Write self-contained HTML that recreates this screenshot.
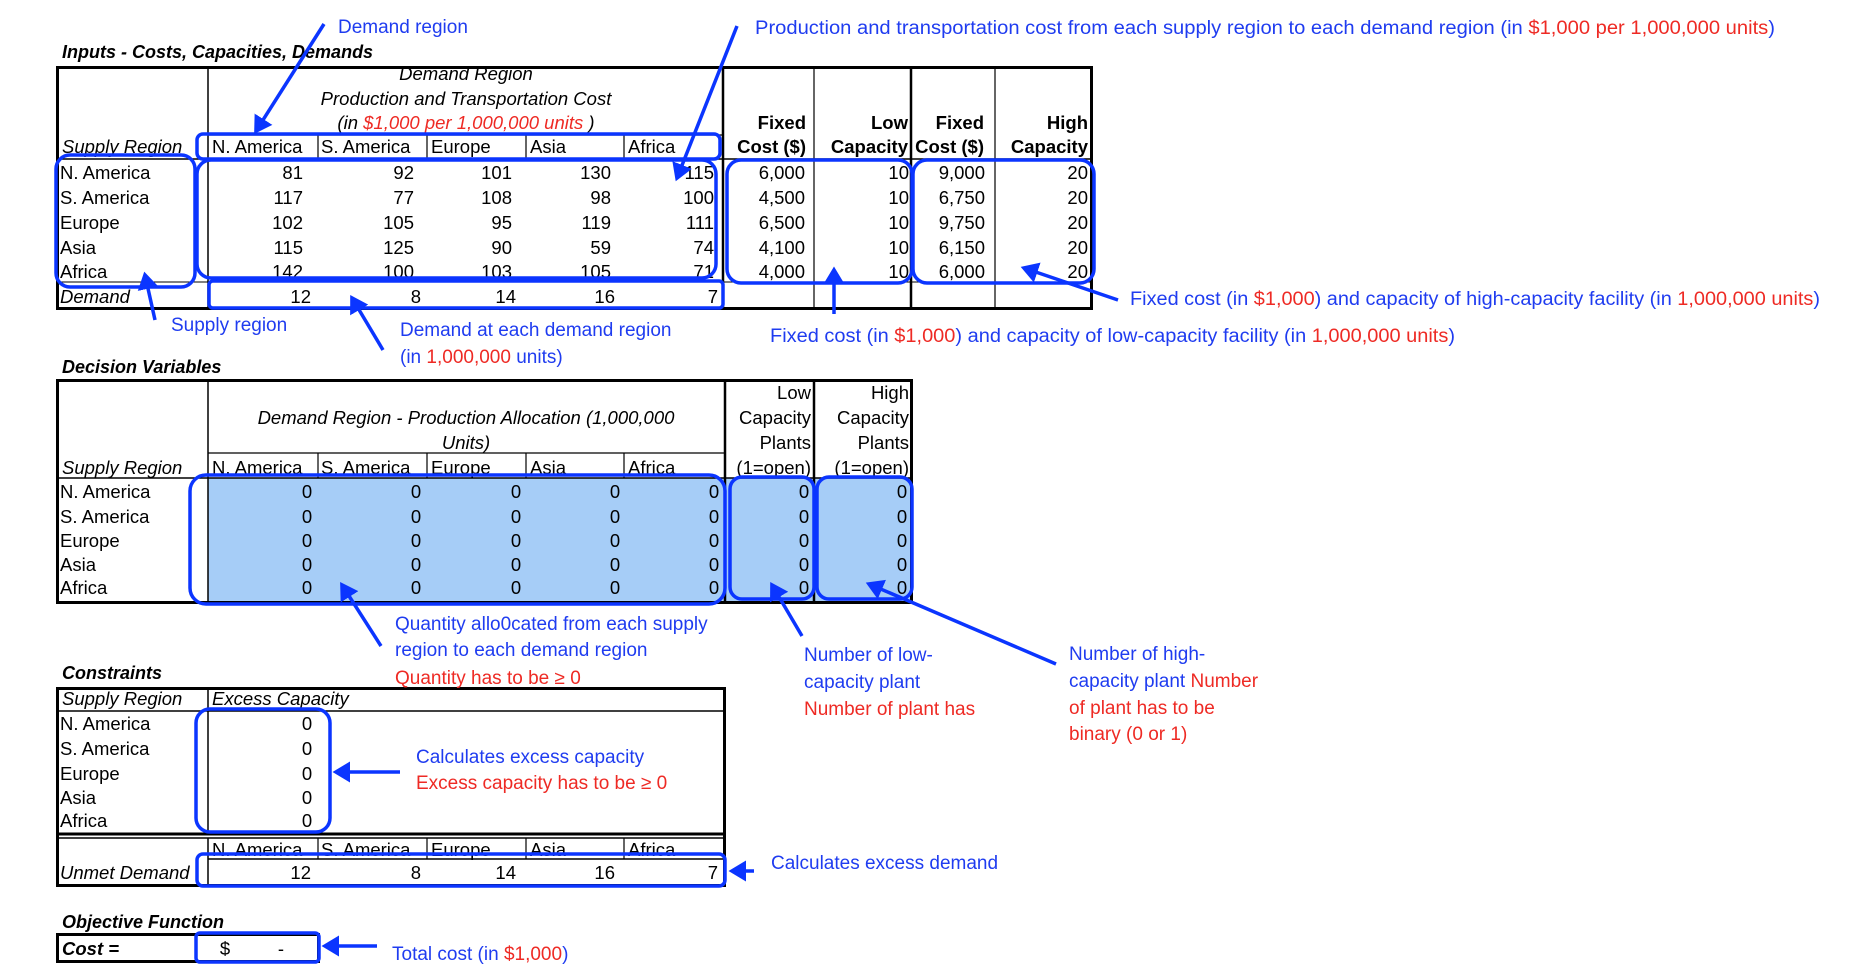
<!DOCTYPE html>
<html><head><meta charset="utf-8"><style>
html,body{margin:0;padding:0;background:#fff;}
svg{display:block;}
text{font-family:"Liberation Sans",Arial,sans-serif;}
.t{font-size:18.5px;fill:#000;}
.i{font-style:italic;}
.b{font-weight:bold;}
.a{font-size:19px;fill:#1f3cf0;}
.r{fill:#ee2a24;}
.bl{fill:none;stroke:#0b35ff;stroke-width:3.5;}
.al{stroke:#0b35ff;stroke-width:3.5;fill:none;}
</style></head><body>
<svg width="1866" height="980" viewBox="0 0 1866 980" xmlns="http://www.w3.org/2000/svg">
<defs><marker id="ah" markerWidth="6" markerHeight="6" refX="4" refY="3" orient="auto" markerUnits="strokeWidth"><path d="M0,0 L5,3 L0,6 Z" fill="#0b35ff"/></marker></defs>

<!-- ===== TABLE 1 ===== -->
<text x="62" y="58" class="t b i" style="font-size:18px">Inputs - Costs, Capacities, Demands</text>
<g stroke="#000" fill="none">
<rect x="57.5" y="67.5" width="1034" height="241" stroke-width="3"/>
<line x1="208" y1="67" x2="208" y2="309" stroke-width="1.5"/>
<line x1="723" y1="67" x2="723" y2="309" stroke-width="2.5"/>
<line x1="814" y1="67" x2="814" y2="309" stroke-width="1.2"/>
<line x1="911" y1="67" x2="911" y2="309" stroke-width="2.5"/>
<line x1="995" y1="67" x2="995" y2="309" stroke-width="1.2"/>
<line x1="208" y1="135" x2="723" y2="135" stroke-width="1.2"/>
<line x1="57" y1="159" x2="1091" y2="159" stroke-width="1.5"/>
<line x1="57" y1="282" x2="1091" y2="282" stroke-width="1"/>
<g stroke-width="1.2"><line x1="318" y1="135" x2="318" y2="159"/><line x1="427" y1="135" x2="427" y2="159"/><line x1="526" y1="135" x2="526" y2="159"/><line x1="624" y1="135" x2="624" y2="159"/></g>
</g>
<g class="t i" text-anchor="middle">
<text x="466" y="80">Demand Region</text>
<text x="466" y="105">Production and Transportation Cost</text>
<text x="466" y="129">(in <tspan class="r">$1,000 per 1,000,000 units</tspan> )</text>
</g>
<g class="t b" text-anchor="end">
<text x="806" y="129">Fixed</text><text x="806" y="153">Cost ($)</text>
<text x="908" y="129">Low</text><text x="908" y="153">Capacity</text>
<text x="984" y="129">Fixed</text><text x="984" y="153">Cost ($)</text>
<text x="1088" y="129">High</text><text x="1088" y="153">Capacity</text>
</g>
<g class="t">
<text x="62" y="153" class="i">Supply Region</text>
<text x="212" y="153">N. America</text><text x="321" y="153">S. America</text><text x="431" y="153">Europe</text><text x="530" y="153">Asia</text><text x="628" y="153">Africa</text>
<text x="60" y="179">N. America</text><text x="60" y="204">S. America</text><text x="60" y="229">Europe</text><text x="60" y="254">Asia</text><text x="60" y="278">Africa</text>
<text x="60" y="303" class="i">Demand</text>
</g>
<g class="t" text-anchor="end">
<text x="303" y="179">81</text><text x="414" y="179">92</text><text x="512" y="179">101</text><text x="611" y="179">130</text><text x="714" y="179">115</text>
<text x="303" y="204">117</text><text x="414" y="204">77</text><text x="512" y="204">108</text><text x="611" y="204">98</text><text x="714" y="204">100</text>
<text x="303" y="229">102</text><text x="414" y="229">105</text><text x="512" y="229">95</text><text x="611" y="229">119</text><text x="714" y="229">111</text>
<text x="303" y="254">115</text><text x="414" y="254">125</text><text x="512" y="254">90</text><text x="611" y="254">59</text><text x="714" y="254">74</text>
<text x="303" y="278">142</text><text x="414" y="278">100</text><text x="512" y="278">103</text><text x="611" y="278">105</text><text x="714" y="278">71</text>
<text x="311" y="303">12</text><text x="421" y="303">8</text><text x="516" y="303">14</text><text x="615" y="303">16</text><text x="718" y="303">7</text>
<text x="805" y="179">6,000</text><text x="805" y="204">4,500</text><text x="805" y="229">6,500</text><text x="805" y="254">4,100</text><text x="805" y="278">4,000</text>
<text x="909" y="179">10</text><text x="909" y="204">10</text><text x="909" y="229">10</text><text x="909" y="254">10</text><text x="909" y="278">10</text>
<text x="985" y="179">9,000</text><text x="985" y="204">6,750</text><text x="985" y="229">9,750</text><text x="985" y="254">6,150</text><text x="985" y="278">6,000</text>
<text x="1088" y="179">20</text><text x="1088" y="204">20</text><text x="1088" y="229">20</text><text x="1088" y="254">20</text><text x="1088" y="278">20</text>
</g>

<!-- ===== TABLE 2 ===== -->
<text x="62" y="373" class="t b i" style="font-size:18px">Decision Variables</text>
<rect x="208" y="478" width="704" height="125" fill="#a6cdf7"/>
<g stroke="#000" fill="none">
<rect x="57.5" y="380.5" width="854" height="222" stroke-width="3"/>
<line x1="208" y1="380" x2="208" y2="602" stroke-width="1.5"/>
<line x1="725" y1="380" x2="725" y2="602" stroke-width="2.5"/>
<line x1="814" y1="380" x2="814" y2="602" stroke-width="2.5"/>
<line x1="208" y1="453" x2="725" y2="453" stroke-width="1.2"/>
<line x1="57" y1="478" x2="912" y2="478" stroke-width="1.5"/>
<g stroke-width="1.2"><line x1="318" y1="453" x2="318" y2="478"/><line x1="427" y1="453" x2="427" y2="478"/><line x1="526" y1="453" x2="526" y2="478"/><line x1="624" y1="453" x2="624" y2="478"/></g>
</g>
<g class="t i" text-anchor="middle">
<text x="466" y="424">Demand Region - Production Allocation (1,000,000</text>
<text x="466" y="449">Units)</text>
</g>
<g class="t" text-anchor="end">
<text x="811" y="399">Low</text><text x="811" y="424">Capacity</text><text x="811" y="449">Plants</text><text x="811" y="474">(1=open)</text>
<text x="909" y="399">High</text><text x="909" y="424">Capacity</text><text x="909" y="449">Plants</text><text x="909" y="474">(1=open)</text>
</g>
<g class="t">
<text x="62" y="474" class="i">Supply Region</text>
<text x="212" y="474">N. America</text><text x="321" y="474">S. America</text><text x="431" y="474">Europe</text><text x="530" y="474">Asia</text><text x="628" y="474">Africa</text>
<text x="60" y="498">N. America</text><text x="60" y="523">S. America</text><text x="60" y="547">Europe</text><text x="60" y="571">Asia</text><text x="60" y="594">Africa</text>
</g>
<g class="t" text-anchor="middle">
<text x="307" y="498">0</text><text x="416" y="498">0</text><text x="516" y="498">0</text><text x="615" y="498">0</text><text x="714" y="498">0</text><text x="804" y="498">0</text><text x="902" y="498">0</text>
<text x="307" y="523">0</text><text x="416" y="523">0</text><text x="516" y="523">0</text><text x="615" y="523">0</text><text x="714" y="523">0</text><text x="804" y="523">0</text><text x="902" y="523">0</text>
<text x="307" y="547">0</text><text x="416" y="547">0</text><text x="516" y="547">0</text><text x="615" y="547">0</text><text x="714" y="547">0</text><text x="804" y="547">0</text><text x="902" y="547">0</text>
<text x="307" y="571">0</text><text x="416" y="571">0</text><text x="516" y="571">0</text><text x="615" y="571">0</text><text x="714" y="571">0</text><text x="804" y="571">0</text><text x="902" y="571">0</text>
<text x="307" y="594">0</text><text x="416" y="594">0</text><text x="516" y="594">0</text><text x="615" y="594">0</text><text x="714" y="594">0</text><text x="804" y="594">0</text><text x="902" y="594">0</text>
</g>

<!-- ===== TABLE 3 ===== -->
<text x="62" y="679" class="t b i" style="font-size:18px">Constraints</text>
<g stroke="#000" fill="none">
<rect x="57.5" y="688.5" width="667" height="197" stroke-width="3"/>
<line x1="208" y1="688" x2="208" y2="834" stroke-width="1.5"/>
<line x1="208" y1="838" x2="208" y2="886" stroke-width="1.5"/>
<line x1="57" y1="711" x2="725" y2="711" stroke-width="1.5"/>
<line x1="57" y1="834" x2="725" y2="834" stroke-width="3"/>
<line x1="57" y1="838" x2="725" y2="838" stroke-width="1.5"/>
<line x1="208" y1="859" x2="725" y2="859" stroke-width="1.5"/>
<g stroke-width="1.2"><line x1="318" y1="838" x2="318" y2="859"/><line x1="427" y1="838" x2="427" y2="859"/><line x1="526" y1="838" x2="526" y2="859"/><line x1="624" y1="838" x2="624" y2="859"/></g>
</g>
<g class="t">
<text x="62" y="705" class="i">Supply Region</text><text x="212" y="705" class="i">Excess Capacity</text>
<text x="60" y="730">N. America</text><text x="60" y="755">S. America</text><text x="60" y="780">Europe</text><text x="60" y="804">Asia</text><text x="60" y="827">Africa</text>
<text x="212" y="856">N. America</text><text x="321" y="856">S. America</text><text x="431" y="856">Europe</text><text x="530" y="856">Asia</text><text x="628" y="856">Africa</text>
<text x="60" y="879" class="i">Unmet Demand</text>
</g>
<g class="t" text-anchor="middle">
<text x="307" y="730">0</text><text x="307" y="755">0</text><text x="307" y="780">0</text><text x="307" y="804">0</text><text x="307" y="827">0</text>
</g>
<g class="t" text-anchor="end">
<text x="311" y="879">12</text><text x="421" y="879">8</text><text x="516" y="879">14</text><text x="615" y="879">16</text><text x="718" y="879">7</text>
</g>

<!-- ===== OBJECTIVE ===== -->
<text x="62" y="928" class="t b i" style="font-size:18px">Objective Function</text>
<rect x="57.5" y="934.5" width="261" height="27" fill="none" stroke="#000" stroke-width="3"/>
<text x="62" y="955" class="t b i">Cost =</text>
<text x="225" y="955" class="t" text-anchor="middle">$</text>
<text x="281" y="955" class="t" text-anchor="middle">-</text>

<!-- ===== BLUE BOXES ===== -->
<rect x="197" y="134" width="523" height="25" rx="6" class="bl"/>
<rect x="56" y="155" width="139" height="132" rx="14" class="bl"/>
<rect x="197" y="160" width="519" height="118" rx="14" class="bl"/>
<rect x="209" y="281" width="514" height="27" rx="4" class="bl"/>
<rect x="727" y="160" width="185" height="123" rx="14" class="bl"/>
<rect x="913" y="160" width="181" height="123" rx="14" class="bl"/>
<rect x="190" y="475" width="535" height="129" rx="16" class="bl"/>
<rect x="730" y="477" width="84" height="122" rx="12" class="bl"/>
<rect x="817" y="477" width="95" height="122" rx="12" class="bl"/>
<rect x="196" y="709" width="134" height="123" rx="14" class="bl"/>
<rect x="197" y="854" width="528" height="32" rx="6" class="bl"/>
<rect x="196" y="933" width="123" height="29" rx="4" class="bl"/>

<!-- ===== ARROWS ===== -->
<line x1="324" y1="24" x2="256" y2="131" class="al" marker-end="url(#ah)"/>
<line x1="737" y1="26" x2="677" y2="178" class="al" marker-end="url(#ah)"/>
<line x1="1118" y1="300" x2="1024" y2="268" class="al" marker-end="url(#ah)"/>
<line x1="155" y1="320" x2="145" y2="275" class="al" marker-end="url(#ah)"/>
<line x1="383" y1="350" x2="352" y2="298" class="al" marker-end="url(#ah)"/>
<line x1="834" y1="314" x2="834" y2="270" class="al" marker-end="url(#ah)"/>
<line x1="381" y1="646" x2="342" y2="585" class="al" marker-end="url(#ah)"/>
<line x1="802" y1="636" x2="772" y2="585" class="al" marker-end="url(#ah)"/>
<line x1="1056" y1="664" x2="869" y2="584" class="al" marker-end="url(#ah)"/>
<line x1="400" y1="772" x2="336" y2="772" class="al" marker-end="url(#ah)"/>
<line x1="754" y1="871" x2="732" y2="871" class="al" marker-end="url(#ah)"/>
<line x1="377" y1="946" x2="325" y2="946" class="al" marker-end="url(#ah)"/>

<!-- ===== ANNOTATIONS ===== -->
<g class="a">
<text x="338" y="33">Demand region</text>
<text x="755" y="34" textLength="1020" lengthAdjust="spacingAndGlyphs">Production and transportation cost from each supply region to each demand region (in <tspan class="r">$1,000 per 1,000,000 units</tspan>)</text>
<text x="1130" y="305" textLength="690" lengthAdjust="spacingAndGlyphs">Fixed cost (in <tspan class="r">$1,000</tspan>) and capacity of high-capacity facility (in <tspan class="r">1,000,000 units</tspan>)</text>
<text x="171" y="331">Supply region</text>
<text x="400" y="336">Demand at each demand region</text>
<text x="400" y="363">(in <tspan class="r">1,000,000</tspan> units)</text>
<text x="770" y="342" textLength="685" lengthAdjust="spacingAndGlyphs">Fixed cost (in <tspan class="r">$1,000</tspan>) and capacity of low-capacity facility (in <tspan class="r">1,000,000 units</tspan>)</text>
<text x="395" y="630">Quantity allo0cated from each supply</text>
<text x="395" y="656">region to each demand region</text>
<text x="395" y="684" class="r">Quantity has to be ≥ 0</text>
<text x="804" y="661">Number of low-</text>
<text x="804" y="688">capacity plant</text>
<text x="804" y="715" class="r">Number of plant has</text>
<text x="1069" y="660">Number of high-</text>
<text x="1069" y="687">capacity plant <tspan class="r">Number</tspan></text>
<text x="1069" y="714" class="r">of plant has to be</text>
<text x="1069" y="740" class="r">binary (0 or 1)</text>
<text x="416" y="763">Calculates excess capacity</text>
<text x="416" y="789" class="r">Excess capacity has to be ≥ 0</text>
<text x="771" y="869">Calculates excess demand</text>
<text x="392" y="960">Total cost (in <tspan class="r">$1,000</tspan>)</text>
</g>
</svg>
</body></html>
